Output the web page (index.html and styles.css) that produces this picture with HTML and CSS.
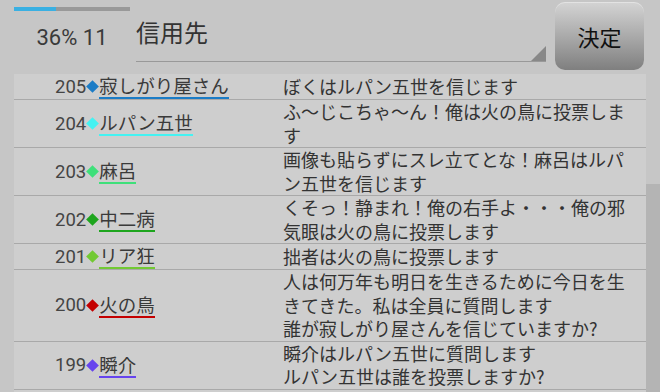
FILE: index.html
```html
<!DOCTYPE html>
<html lang="ja">
<head>
    <meta charset="UTF-8">
    <meta name="viewport" content="width=device-width, initial-scale=1.0">
    <title>投票</title>
    <link rel="stylesheet" href="styles.css">
</head>
<body>
    <div class="top">
        <div class="status">
            <div class="progress"><div class="progress-fill" style="width: 36%"></div></div>
            <div class="count">36% 11</div>
        </div>
        <div class="spinner">
            <span class="spinner-text">信用先</span>
            <span class="spinner-arrow"></span>
        </div>
        <button class="decide">決定</button>
    </div>

    <div class="main">
        <div class="list">
            <div class="row">
                <div class="who"><span class="no">205</span><span class="mark c-blue"></span><span class="name c-blue">寂しがり屋さん</span></div>
                <div class="msg">ぼくはルパン五世を信じます</div>
            </div>
            <div class="row">
                <div class="who"><span class="no">204</span><span class="mark c-cyan"></span><span class="name c-cyan">ルパン五世</span></div>
                <div class="msg">ふ〜じこちゃ〜ん！俺は火の鳥に投票します</div>
            </div>
            <div class="row">
                <div class="who"><span class="no">203</span><span class="mark c-mint"></span><span class="name c-mint">麻呂</span></div>
                <div class="msg">画像も貼らずにスレ立てとな！麻呂はルパン五世を信じます</div>
            </div>
            <div class="row">
                <div class="who"><span class="no">202</span><span class="mark c-green"></span><span class="name c-green">中二病</span></div>
                <div class="msg">くそっ！静まれ！俺の右手よ・・・俺の邪気眼は火の鳥に投票します</div>
            </div>
            <div class="row">
                <div class="who"><span class="no">201</span><span class="mark c-lime"></span><span class="name c-lime">リア狂</span></div>
                <div class="msg">拙者は火の鳥に投票します</div>
            </div>
            <div class="row">
                <div class="who"><span class="no">200</span><span class="mark c-red"></span><span class="name c-red">火の鳥</span></div>
                <div class="msg">人は何万年も明日を生きるために今日を生きてきた。私は全員に質問します<br>誰が寂しがり屋さんを信じていますか?</div>
            </div>
            <div class="row">
                <div class="who"><span class="no">199</span><span class="mark c-purple"></span><span class="name c-purple">瞬介</span></div>
                <div class="msg">瞬介はルパン五世に質問します<br>ルパン五世は誰を投票しますか?</div>
            </div>
        </div>
        <div class="scroll"><div class="scroll-thumb"></div></div>
    </div>
</body>
</html>
```

FILE: styles.css
```css
body {
  margin: 0;
  width: 660px;
  height: 392px;
  overflow: hidden;
  background: #c6c6c6;
  color: #3a3a3a;
  font-family: "Noto Sans CJK JP", "Noto Sans", sans-serif;
}

/* header: progress, spinner, button */
.top {
  display: flex;
  height: 74px;
  padding: 0 16px 0 14px;
  box-sizing: border-box;
}

.status {
  width: 116px;
}

.progress {
  margin-top: 7px;
  height: 4px;
  background: #999;
}

.progress-fill {
  height: 100%;
  background: #3ab0e2;
}

.count {
  margin-top: 14px;
  font-family: Roboto, "Noto Sans", sans-serif;
  font-size: 22px;
  line-height: 26px;
  text-align: center;
  color: #3a3a3a;
}

.spinner {
  position: relative;
  flex: 1;
  margin-left: 6px;
  height: 61px;
  border-bottom: 1px solid #999;
}

.spinner-text {
  display: block;
  padding-top: 16px;
  font-size: 24px;
  line-height: 32px;
  color: #333;
}

.spinner-arrow {
  position: absolute;
  right: 0;
  bottom: 0;
  width: 15px;
  height: 15px;
  background: #888;
  clip-path: polygon(100% 0, 100% 100%, 0 100%);
}

.decide {
  width: 89px;
  height: 68px;
  margin: 2px 0 0 9px;
  padding: 0;
  border: none;
  border-radius: 10px;
  background: linear-gradient(#d4d4d4, #a6a6a6 55%, #7f7f7f);
  box-shadow: inset 0 1px 0 rgba(255, 255, 255, .35);
  font-family: "Noto Sans CJK JP", sans-serif;
  font-size: 22px;
  color: #111;
}

/* list */
.main {
  display: flex;
  padding-left: 14px;
}

.list {
  width: 632px;
  background: #cecece;
}

.row {
  display: flex;
  align-items: center;
  border-bottom: 1px solid #a9a9a9;
}

.who {
  display: flex;
  align-items: center;
  width: 269px;
  padding-left: 41px;
  box-sizing: border-box;
  font-size: 18.5px;
}

.no {
  font-family: Roboto, "Noto Sans", sans-serif;
  color: #444;
}

.mark {
  width: 9px;
  height: 9px;
  margin: 0 2px 0 2px;
  transform: rotate(45deg);
}

.name {
  line-height: 22px;
  padding-bottom: 1px;
  border-bottom: 2px solid;
  color: #3a3a3a;
}

.msg {
  width: 350px;
  font-size: 18px;
  line-height: 23.5px;
  color: #333;
}

.c-blue { background: #1b7cc6; border-color: #1b7cc6; }
.c-cyan { background: #44f2f2; border-color: #44f2f2; }
.c-mint { background: #3fe07a; border-color: #3fe07a; }
.c-green { background: #1ea51e; border-color: #1ea51e; }
.c-lime { background: #72c933; border-color: #72c933; }
.c-red { background: #c40000; border-color: #c40000; }
.c-purple { background: #6644ee; border-color: #6644ee; }

.name.c-blue, .name.c-cyan, .name.c-mint, .name.c-green,
.name.c-lime, .name.c-red, .name.c-purple {
  background: none;
}

.scroll {
  width: 14px;
  height: 318px;
}

.scroll-thumb {
  margin-top: 110px;
  height: 208px;
  background: #b4b4b4;
}
```
